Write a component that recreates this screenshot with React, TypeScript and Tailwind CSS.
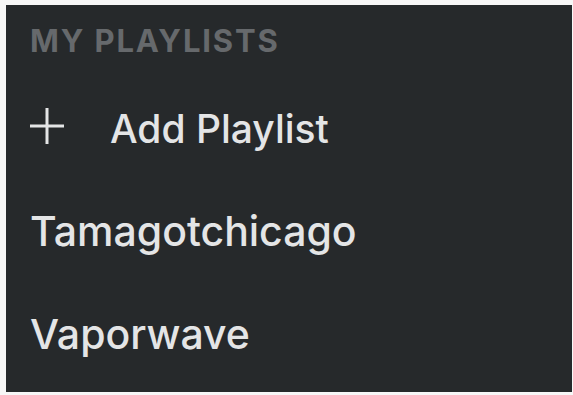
import React from "react";

const playlists = ["Tamagotchicago", "Vaporwave"];

const PlusIcon = () => (
  <svg width="34" height="36" viewBox="0 0 34 36" fill="none" className="-mt-[5px] shrink-0">
    <path d="M17 0V36M0 18H34" stroke="#e4e5e6" strokeWidth="3" />
  </svg>
);

export default function App() {
  return (
    <div className="h-[395px] w-[573px] bg-[#f7f7f7] pt-[5px] pl-[6px] pr-[1px] pb-[3px]">
      <div className="h-full w-full bg-[#26292b] pl-[24px] font-['Inter',sans-serif] text-[#e4e5e6]">
        <div className="h-[72px] text-[31px] font-bold leading-[72px] tracking-[0.06em] text-[#66696c]">
          MY PLAYLISTS
        </div>
        <div className="flex h-[103px] items-center gap-[46px]">
          <PlusIcon />
          <span className="text-[39px] font-medium leading-[103px]">Add Playlist</span>
        </div>
        {playlists.map((name) => (
          <div key={name} className="h-[103px] text-[41px] font-medium leading-[103px]">
            {name}
          </div>
        ))}
      </div>
    </div>
  );
}
